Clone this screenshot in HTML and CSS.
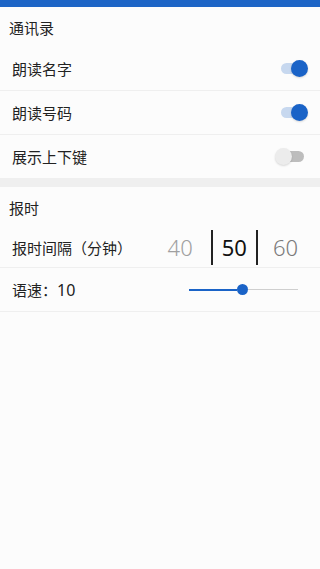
FILE: index.html
```html
<!DOCTYPE html>
<html>
<head>
    <title>设置</title>
    <link rel="stylesheet" href="styles.css">
</head>
<body>

    <div class="topbar"></div>

    <div class="section">
        <div class="section-title">通讯录</div>

        <div class="row">
            <span class="label">朗读名字</span>
            <div class="switch on"><div class="track"></div><div class="thumb"></div></div>
        </div>
        <div class="row">
            <span class="label">朗读号码</span>
            <div class="switch on"><div class="track"></div><div class="thumb"></div></div>
        </div>
        <div class="row last">
            <span class="label">展示上下键</span>
            <div class="switch"><div class="track"></div><div class="thumb"></div></div>
        </div>
    </div>

    <div class="spacer"></div>

    <div class="section">
        <div class="section-title">报时</div>

        <div class="row picker-row">
            <span class="label">报时间隔（分钟）</span>
            <div class="picker">
                <span class="num prev">40</span>
                <span class="bar"></span>
                <span class="num current">50</span>
                <span class="bar"></span>
                <span class="num next">60</span>
            </div>
        </div>
        <div class="row">
            <span class="label">语速：<span class="speed">10</span></span>
            <div class="slider">
                <div class="slider-fill" style="width: 48px"></div>
                <div class="slider-thumb"></div>
                <div class="slider-rest"></div>
            </div>
        </div>
    </div>

</body>
</html>
```

FILE: styles.css
```css
body {
    font-family: "Noto Sans", "Noto Sans CJK SC", sans-serif;
    background: #fcfcfc;
    color: #222;
    margin: 0;
    padding: 0;
}

.topbar {
    height: 7px;
    background-color: #1d65c6;
}

.section-title {
    height: 40px;
    display: flex;
    align-items: center;
    padding-left: 9px;
    font-size: 15px;
}

.row {
    height: 43px;
    display: flex;
    align-items: center;
    justify-content: space-between;
    padding-left: 12px;
    border-bottom: 1px solid #efefef;
}

    .row.last {
        border-bottom: none;
    }

.label {
    font-size: 15px;
}

.speed {
    font-size: 16px;
}

.spacer {
    height: 9px;
    background: #efefef;
}

/* switches */
.switch {
    position: relative;
    width: 33px;
    height: 17px;
    margin-right: 12px;
}

    .switch .track {
        position: absolute;
        left: 6px;
        top: 3px;
        width: 23px;
        height: 11px;
        border-radius: 6px;
        background: #bdbdbd;
    }

    .switch .thumb {
        position: absolute;
        left: 0;
        top: 0;
        width: 17px;
        height: 17px;
        border-radius: 50%;
        background: #ececec;
        box-shadow: 0 1px 2px rgba(0, 0, 0, 0.15);
    }

    .switch.on .track {
        background: #c7d8ef;
    }

    .switch.on .thumb {
        left: 16px;
        background: #1a63c7;
    }

/* interval picker */
.picker-row {
    height: 40px;
}

.picker {
    display: flex;
    align-items: center;
    margin-right: 22px;
}

.num {
    font-family: "Noto Sans", sans-serif;
    font-size: 22px;
    font-weight: 300;
    line-height: 1;
}

    .num.prev {
        color: #a0a0a0;
        margin-right: 18px;
    }

    .num.current {
        color: #111;
        font-weight: 400;
        margin: 0 9px;
    }

    .num.next {
        color: #7a7a7a;
        margin-left: 15px;
    }

.bar {
    width: 2px;
    height: 35px;
    background: #222;
}

/* speed slider */
.slider {
    display: flex;
    align-items: center;
    width: 109px;
    margin-right: 22px;
}

.slider-fill {
    height: 2px;
    background: #1a63c7;
}

.slider-thumb {
    width: 11px;
    height: 11px;
    border-radius: 50%;
    background: #1a63c7;
    flex-shrink: 0;
}

.slider-rest {
    flex: 1;
    height: 1px;
    background: #cfcfcf;
}
```
